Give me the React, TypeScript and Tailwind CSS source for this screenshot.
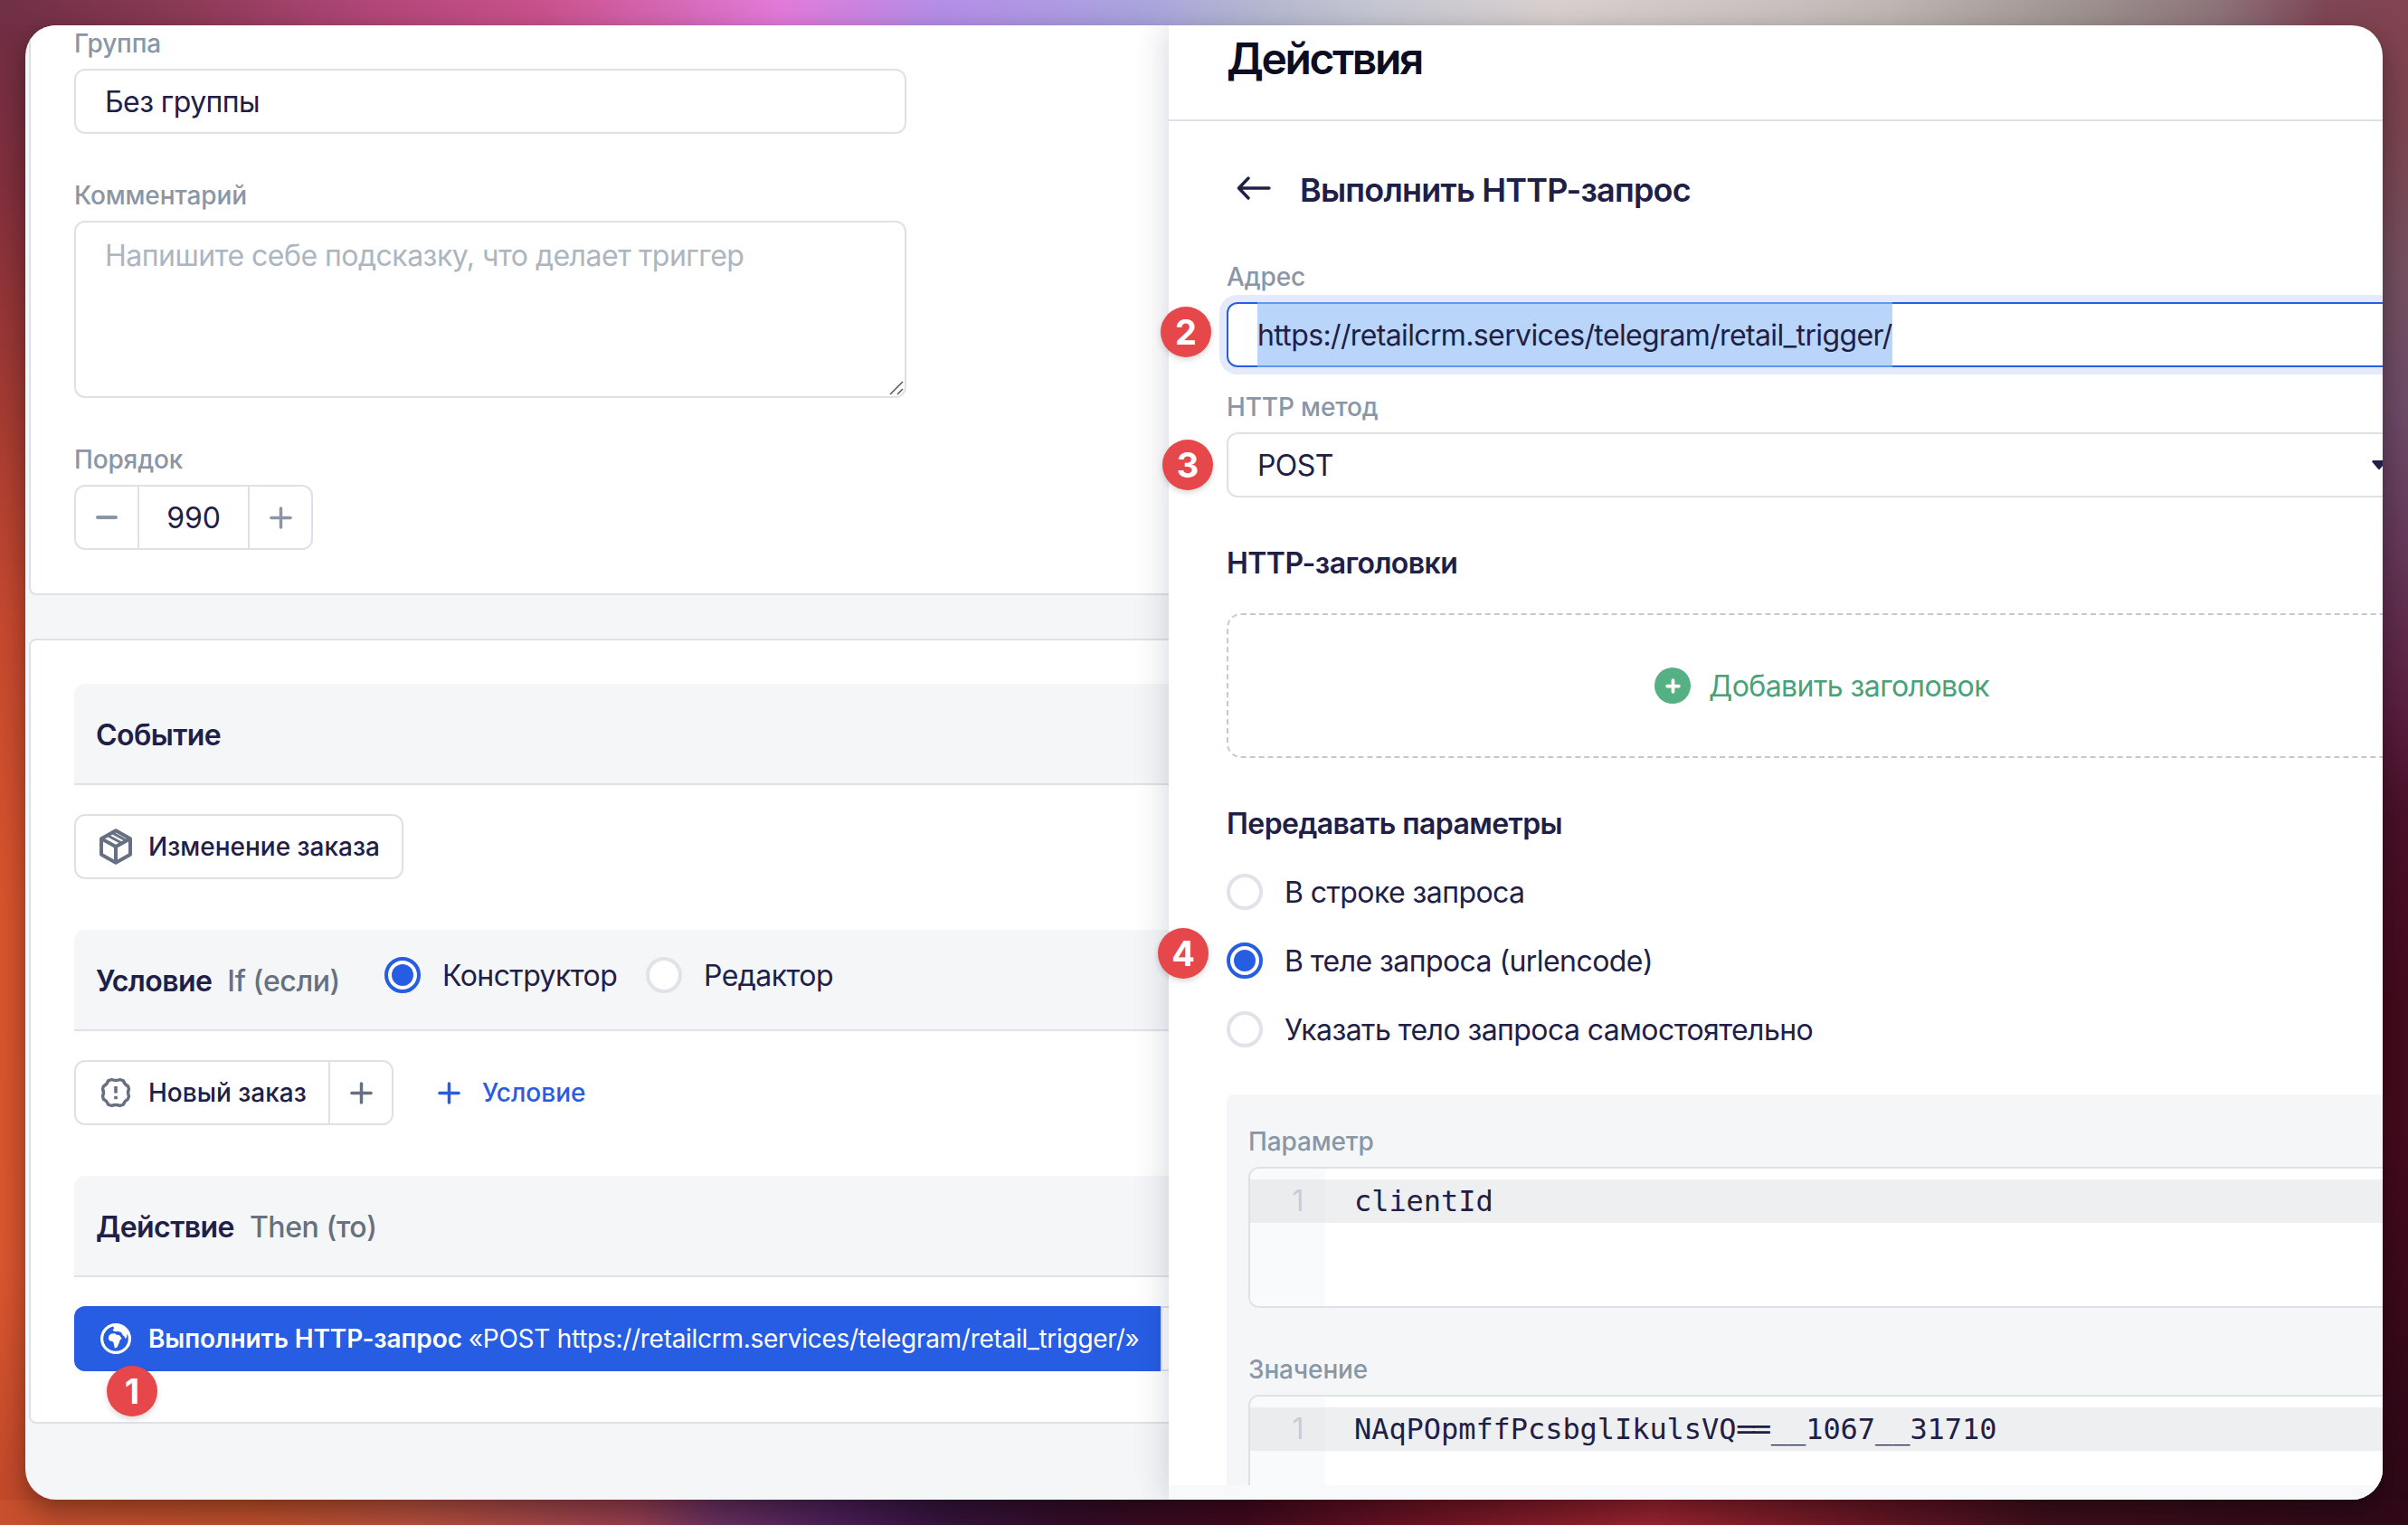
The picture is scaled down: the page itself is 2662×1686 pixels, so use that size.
import React, { useState } from "react";

type Option = { id: string; label: string };

const PARAM_OPTIONS: Option[] = [
  { id: "query", label: "В строке запроса" },
  { id: "urlencode", label: "В теле запроса (urlencode)" },
  { id: "custom", label: "Указать тело запроса самостоятельно" },
];

const BoxIcon = () => (
  <svg width="36" height="40" viewBox="0 0 36 40" fill="none" stroke="#667080" strokeWidth="4" strokeLinejoin="round">
    <path d="M18 2.200 34 11.200V28.800L18 37.800 2 28.800V11.200Z" />
    <path d="M2.500 11.500 18 20l15.500-8.500M18 20v17.500" />
    <path d="M9 7.700 25 16.300M14 4.800 30 13.400" strokeWidth="2.800" />
  </svg>
);

const AlertIcon = () => (
  <svg width="36" height="36" viewBox="0 0 36 36" fill="none" stroke="#667080" strokeWidth="3.400" strokeLinejoin="round">
    <path d="M13.500 3.500Q18 5.500 22.500 3.500L26.500 4.800Q27.500 9 31.500 10.800L32.500 14Q30.500 18 32.500 22L31.200 25.500Q27.500 27 26.500 31.200L22.500 32.500Q18 30.500 13.500 32.500L9.500 31.200Q8.500 27 4.500 25.500L3.500 22Q5.500 18 3.500 14L4.500 10.800Q8.500 9 9.500 4.800Z" />
    <path d="M18 11v7.500" strokeWidth="3.600" />
    <path d="M18 21.800v3.400" strokeWidth="3.600" />
  </svg>
);

const GlobeIcon = () => (
  <svg width="34" height="34" viewBox="0 0 34 34">
    <circle cx="17" cy="17" r="15.400" fill="none" stroke="#fff" strokeWidth="3.200" />
    <path fill="#fff" d="M14 2 15 5.500 13.500 7.500 15.500 9H20L23 10 25 13.500 26.500 14.500 27.500 17 29 15.500 29.500 12 32 14 29 6 22 2Z" />
    <path fill="#fff" d="M9.500 13.500 12 11.500 16 11.200 18 12.800 21 13.200 23.500 16.500 21.500 19 20.500 22 18.500 26.500 15.800 27.500 15 23.500 14.200 20.500 10.500 19.500 8.800 17Z" />
  </svg>
);

const Plus = ({ size = 25, color = "#8a96a6", width = 3.6 }: { size?: number; color?: string; width?: number }) => (
  <svg width={size} height={size} viewBox="0 0 26 26" overflow="visible" stroke={color} strokeWidth={width} strokeLinecap="round">
    <path d="M13 2v22M2 13h22" />
  </svg>
);

const Label = ({ children }: { children: React.ReactNode }) => (
  <div className="mb-2.5 h-9 text-[28px] leading-9 font-medium tracking-[-0.15px] text-[#8a96a6]">{children}</div>
);

const Radio = ({ checked }: { checked: boolean }) =>
  checked ? (
    <span className="flex size-10 shrink-0 items-center justify-center rounded-full border-4 border-[#265de3] bg-white">
      <span className="size-6 rounded-full bg-[#265de3]" />
    </span>
  ) : (
    <span className="size-10 shrink-0 rounded-full border-4 border-[#e0e3e8] bg-white" />
  );

const SectionHeader = ({ title, hint, children }: { title: string; hint?: string; children?: React.ReactNode }) => (
  <div className="flex h-28 items-center rounded-t-xl border-b-2 border-[#dee1e6] bg-[#f5f6f8] pt-1 pl-6 text-[32px] leading-[48px] tracking-[-0.57px]">
    <div className="w-[319px] whitespace-nowrap">
      <span className="font-[560]">{title}</span>
      {hint && <span className="ml-[17px] font-medium tracking-[-0.4px] text-[#667080]">{hint}</span>}
    </div>
    {children}
  </div>
);

const CodeField = ({ label, children }: { label: string; children: React.ReactNode }) => (
  <div>
    <Label>{label}</Label>
    <div className="h-[156px] w-[1400px] overflow-hidden rounded-xl border-2 border-[#dee1e6] bg-white">
      <div className="flex h-full w-full flex-col">
        <div className="h-3 w-[83px] bg-[#f9fafc]" />
        <div className="flex h-12 items-center bg-[#eeeff1]">
          <span className="h-12 w-[83px] bg-[#ebecee] pr-[24px] text-right text-[32px] leading-[48px] text-[#c8cdd3]">1</span>
          <span className="ml-8 font-['DejaVu_Sans_Mono',monospace] text-[32px] leading-[48px] tracking-[-0.065px] whitespace-pre">
            {children}
          </span>
        </div>
        <div className="w-[83px] flex-1 bg-[#f9fafc]" />
      </div>
    </div>
  </div>
);

const Badge = ({ n, className }: { n: number; className: string }) => (
  <div
    className={
      "absolute z-20 flex size-14 items-center justify-center rounded-full bg-[#e5474a] text-[38px] leading-none font-bold text-white shadow-[0_3px_6px_rgba(0,0,0,0.15)] " +
      className
    }
  >
    {n}
  </div>
);

const TriggerForm = () => {
  const [order, setOrder] = useState(990);
  const [mode, setMode] = useState("builder");

  return (
    <div className="w-[1264px] shrink-0 overflow-hidden bg-[#f5f6f8] pl-1">
      {/* Основные настройки */}
      <section className="h-[630px] w-[1400px] rounded-b-lg border-2 border-t-0 border-[#dee1e6] bg-white pt-0.5 pl-12 tracking-[-0.57px]">
        <Label>Группа</Label>
        <div className="flex h-[72px] w-[920px] items-center rounded-xl border-2 border-[#dee1e6] px-8 pt-0.5 text-[32px]">Без группы</div>

        <div className="mt-[50px]">
          <Label>Комментарий</Label>
          <div className="relative h-[196px] w-[920px] rounded-xl border-2 border-[#dee1e6] px-8 pt-[13px] text-[32px] leading-[48px] tracking-[-0.52px] text-[#adb5bf]">
            Напишите себе подсказку, что делает триггер
            <svg className="absolute right-0 bottom-0" width="18" height="18" viewBox="0 0 18 18" stroke="#555" strokeWidth="1.500">
              <path d="M2 16 16 2M10 16l6-6" />
            </svg>
          </div>
        </div>

        <div className="mt-[50px]">
          <Label>Порядок</Label>
          <div className="flex h-[72px] w-[264px] items-stretch rounded-xl border-2 border-[#dee1e6]">
            <button className="flex w-[68px] items-center justify-center" onClick={() => setOrder(order - 10)}>
              <span className="h-1 w-6 rounded-full bg-[#8a96a6]" />
            </button>
            <div className="flex flex-1 items-center justify-center border-x-2 border-[#dee1e6] pt-0.5 text-[32px] tracking-[-0.2px]">{order}</div>
            <button className="flex w-[68px] items-center justify-center" onClick={() => setOrder(order + 10)}>
              <Plus />
            </button>
          </div>
        </div>
      </section>

      {/* Событие, условие, действие */}
      <section className="mt-12 h-[868px] w-[1400px] rounded-lg border-2 border-[#dee1e6] bg-white pt-12 pl-12">
        <SectionHeader title="Событие" />
        <div className="mt-8 flex h-[72px] w-[364px] items-center rounded-xl border-2 border-[#dee1e6] pl-[26px] text-[28px] font-medium">
          <BoxIcon />
          <span className="ml-[18px] whitespace-nowrap">Изменение заказа</span>
        </div>

        <div className="mt-14">
          <SectionHeader title="Условие" hint="If (если)">
            <div className="mb-3.5 flex items-center">
              <button className="flex w-[289px] items-center" onClick={() => setMode("builder")}>
                <Radio checked={mode === "builder"} />
                <span className="mt-0.5 ml-6">Конструктор</span>
              </button>
              <button className="flex items-center" onClick={() => setMode("editor")}>
                <Radio checked={mode === "editor"} />
                <span className="mt-0.5 ml-6">Редактор</span>
              </button>
            </div>
          </SectionHeader>
        </div>
        <div className="mt-8 flex h-[72px] items-center text-[28px] font-medium">
          <div className="flex h-full w-[353px] rounded-xl border-2 border-[#dee1e6]">
            <div className="flex w-[279px] items-center pl-[26px]">
              <AlertIcon />
              <span className="ml-[18px] whitespace-nowrap">Новый заказ</span>
            </div>
            <div className="flex flex-1 items-center justify-center border-l-2 border-[#dee1e6]">
              <Plus color="#667080" />
            </div>
          </div>
          <button className="ml-[49px] flex items-center text-[#265de3]">
            <Plus color="#265de3" />
            <span className="ml-6">Условие</span>
          </button>
        </div>

        <div className="mt-14">
          <SectionHeader title="Действие" hint="Then (то)" />
        </div>
        <div className="mt-8 flex h-[72px]">
          <div className="flex w-[1201px] items-center rounded-l-xl bg-[#265de3] pl-[29px] text-[28px] whitespace-pre text-white">
            <GlobeIcon />
            <span className="ml-[19px] font-[560] tracking-[-0.1px]">Выполнить HTTP-запрос </span>
            <span className="tracking-[-0.28px]">«POST https://retailcrm.services/telegram/retail_trigger/»</span>
          </div>
          <div className="w-[72px] border-2 border-[#dee1e6]" />
        </div>
      </section>
    </div>
  );
};

const ActionDrawer = () => {
  const [params, setParams] = useState("urlencode");

  return (
    <div className="relative z-10 flex w-[1342px] flex-col bg-white tracking-[-0.57px] shadow-[0_0_36px_rgba(30,34,72,0.2)]">
      <header className="h-[106px] shrink-0 border-b-2 border-[#dee1e8] pt-[9px] pl-16 text-[48px] leading-[56px] font-semibold tracking-[-2.4px] text-[#0c0d22]">
        Действия
      </header>

      <div className="flex-1 overflow-hidden pt-[52px] pl-16">
        <div className="flex h-12 items-center">
          <svg className="mb-1 ml-[11px]" width="38" height="26" viewBox="0 0 38 26" fill="none" stroke="#1e2048" strokeWidth="3.400" strokeLinecap="round" strokeLinejoin="round">
            <path d="M36 13H2.500M13 2 2.500 13 13 24" />
          </svg>
          <h2 className="ml-8 text-[36px] leading-[48px] font-[560] tracking-[-0.8px]">Выполнить HTTP-запрос</h2>
        </div>

        <div className="mt-[54px]">
          <Label>Адрес</Label>
          <div className="flex h-[72px] w-[1316px] items-center rounded-xl border-2 border-[#265de3] pl-8 ring-8 ring-[#e5e9fc]">
            <span className="h-[72px] shrink-0 border-y-2 border-[#6497ee] bg-[#b9d5fa] text-[32px] leading-[70px] tracking-[-0.63px]">
              https://retailcrm.services/telegram/retail_trigger/
            </span>
          </div>
        </div>

        <div className="mt-[26px]">
          <Label>HTTP метод</Label>
          <div className="flex h-[72px] w-[1316px] items-center justify-between rounded-xl border-2 border-[#dee1e6] pr-8 pl-8 text-[32px]">
            <span className="mt-0.5">POST</span>
            <svg width="16" height="10" viewBox="0 0 16 10" fill="#1e2048">
              <path d="M1.500 0h13a1.200 1.200 0 0 1 .9 2L9 9.400a1.300 1.300 0 0 1-2 0L.6 2a1.200 1.200 0 0 1 .9-2Z" />
            </svg>
          </div>
        </div>

        <h3 className="mt-[49px] text-[32px] leading-[48px] font-[560]">HTTP-заголовки</h3>
        <button className="mt-[31px] flex h-40 w-[1316px] items-center justify-center rounded-2xl border-2 border-dashed border-[#c4c9d1] text-[32px] text-[#47a27a]">
          <span className="flex size-10 items-center justify-center rounded-full bg-[#55b184]">
            <Plus size={15} color="#fff" width={6.5} />
          </span>
          <span className="mt-0.5 ml-5">Добавить заголовок</span>
        </button>

        <h3 className="mt-[49px] text-[32px] leading-[48px] font-[560]">Передавать параметры</h3>
        <div className="mt-[31px] flex flex-col gap-9">
          {PARAM_OPTIONS.map((o) => (
            <button key={o.id} className="flex h-10 items-center text-[32px]" onClick={() => setParams(o.id)}>
              <Radio checked={params === o.id} />
              <span className="mt-0.5 ml-6">{o.label}</span>
            </button>
          ))}
        </div>

        <div className="mt-[52px] flex w-[1400px] flex-col gap-[50px] rounded-lg bg-[#f5f6f8] pt-[34px] pl-6">
          <CodeField label="Параметр">clientId</CodeField>
          <CodeField label="Значение">
            NAqPOpmffPcsbglIkulsVQ
            {/* лигатура: знаки равенства сливаются */}
            <span className="inline-block w-[38.4px] origin-left scale-x-[1.16] tracking-[-4.7px]">==</span>
            __1067__31710
          </CodeField>
        </div>
      </div>

      <footer className="h-4 shrink-0 bg-[#f8f9fb]" />
    </div>
  );
};

// Обои: цветные полосы вдоль краёв экрана
const WALLPAPER =
  "bg-[linear-gradient(90deg,#6f2f45_0px,#8b3a55_200px,#b04677_400px,#c9528c_600px,#e27ad9_862px,#b48ee8_1040px,#a9a4de_1260px,#b5b8d0_1400px,#c5c6d2_1520px,#d8d0ce_1720px,#c8c0be_1980px,#bdb6b2_2090px,#9c8f8d_2320px,#8e747a_2450px,#7f4656_2570px,#82424f_2662px),linear-gradient(90deg,#c8502e_0px,#c0502c_300px,#b8503e_460px,#983f50_700px,#6a3060_790px,#4c205a_920px,#36143e_1040px,#340c26_1200px,#42091e_1380px,#701424_1580px,#9c2430_1830px,#661624_2080px,#3e0f1c_2260px,#300818_2662px),linear-gradient(180deg,#6f2f45_0px,#812f3d_200px,#a53b33_450px,#c7492f_680px,#d9542d_1000px,#db562f_1400px,#c0482a_1686px),linear-gradient(180deg,#82424f_0px,#7c4550_150px,#755060_300px,#6e4b68_450px,#66395a_600px,#5c1f40_780px,#4a1029_900px,#450a1d_1100px,#450a1d_1250px,#2d0816_1686px)] bg-[position:0_0,0_100%,0_0,100%_0] bg-[length:100%_28px,100%_28px,50%_100%,50%_100%] bg-no-repeat";

const App: React.FC = () => {
  return (
    <div className={"h-[1686px] w-[2662px] overflow-hidden p-7 font-['Inter',sans-serif] text-[#1e2048] " + WALLPAPER}>
      <div className="relative h-[1630px] w-[2606px] rounded-[34px] shadow-[0_12px_32px_rgba(0,0,0,0.4)]">
        <div className="flex h-full w-full overflow-hidden rounded-[34px]">
          <TriggerForm />
          <ActionDrawer />
        </div>
        <Badge n={1} className="top-[1482px] left-[90px]" />
        <Badge n={2} className="top-[311px] left-[1255px]" />
        <Badge n={3} className="top-[458px] left-[1257px]" />
        <Badge n={4} className="top-[998px] left-[1252px]" />
      </div>
    </div>
  );
};

export default App;
